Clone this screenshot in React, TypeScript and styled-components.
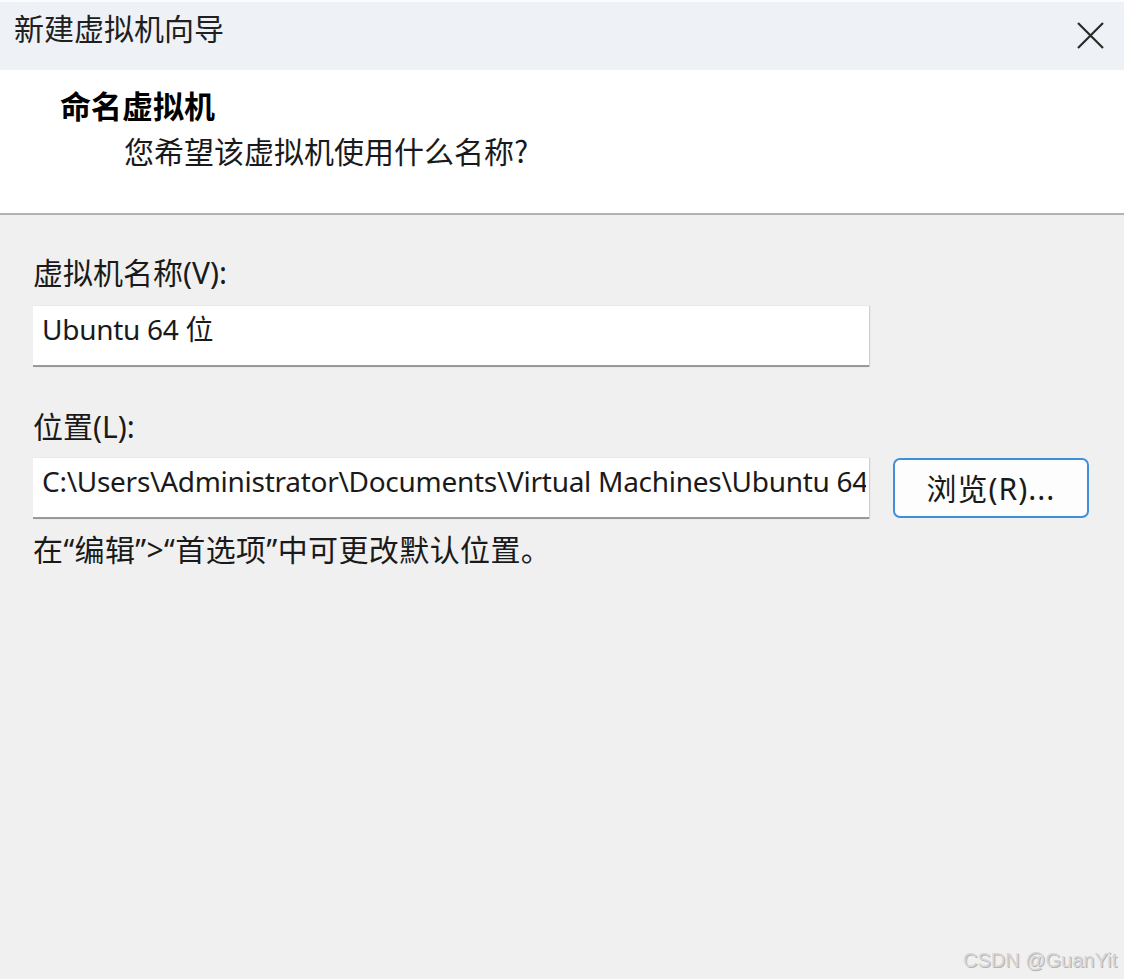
import React from "react";
import styled, { createGlobalStyle } from "styled-components";

const Global = createGlobalStyle`
  html, body { margin: 0; padding: 0; background: #f0f0f0; }
  body { font-family: "Noto Sans", "Noto Sans CJK SC", sans-serif; }
`;

const Dialog = styled.div`
  position: relative;
  width: 1124px;
  height: 979px;
  display: flex;
  flex-direction: column;
  background: #f0f0f0;
  border-top: 2px solid #fbfcfd;
  box-sizing: border-box;
  overflow: hidden;
`;

const TitleBar = styled.div`
  height: 68px;
  flex: none;
  display: flex;
  align-items: flex-start;
  justify-content: space-between;
  background: #eef2f7;
  padding: 10px 18px 0 14px;
  box-sizing: border-box;
`;

const TitleText = styled.div`
  font-family: "Noto Sans CJK SC", sans-serif;
  font-size: 30px;
  color: #202020;
  line-height: 1;
`;

const CloseButton = styled.button`
  width: 32px;
  height: 32px;
  border: none;
  background: transparent;
  padding: 0;
  display: flex;
  align-items: center;
  justify-content: center;
  margin-top: 7px;
`;

const Header = styled.div`
  height: 143px;
  flex: none;
  background: #ffffff;
  border-bottom: 2px solid #b2b2b2;
  box-sizing: content-box;
  padding: 0 0 0 60px;
  display: flex;
  flex-direction: column;
`;

const HeaderTitle = styled.div`
  font-family: "Noto Sans CJK SC", sans-serif;
  font-weight: 700;
  font-size: 31px;
  line-height: 1;
  color: #000;
  margin-top: 19px;
`;

const HeaderSub = styled.div`
  font-family: "Noto Sans CJK SC", sans-serif;
  font-size: 30px;
  line-height: 1;
  color: #1a1a1a;
  margin: 15px 0 0 64px;
`;

const Body = styled.div`
  flex: 1;
  padding: 43px 35px 0 33px;
  display: flex;
  flex-direction: column;
`;

const Label = styled.div<{ $top?: number }>`
  font-size: 30px;
  line-height: 1;
  color: #1a1a1a;
  margin-top: ${(p) => p.$top ?? 0}px;
`;

const Field = styled.input`
  display: block;
  width: 836px;
  height: 61px;
  box-sizing: border-box;
  border: none;
  border-bottom: 2px solid #9a9a9a;
  box-shadow: 1px 0 1px #d0d0d0;
  background: #fff;
  padding: 0 3px 16px 9px;
  font-family: "Noto Sans", "Noto Sans CJK SC", sans-serif;
  font-size: 28px;
  letter-spacing: -0.28px;
  color: #1a1a1a;
  outline: none;
`;

const Row = styled.div<{ $top: number }>`
  display: flex;
  align-items: flex-start;
  gap: 24px;
  margin-top: ${(p) => p.$top}px;
`;

const BrowseButton = styled.button`
  width: 196px;
  height: 60px;
  box-sizing: border-box;
  border: 2px solid #3f8fdb;
  border-radius: 7px;
  background: #fdfdfd;
  font-family: "Noto Sans", "Noto Sans CJK SC", sans-serif;
  font-size: 30px;
  letter-spacing: 1px;
  color: #1a1a1a;
  padding: 0 0 2px 0;
  cursor: default;
`;

const Hint = styled.div`
  font-size: 30px;
  line-height: 1;
  letter-spacing: 0.4px;
  color: #1a1a1a;
  margin-top: 16px;
`;

const Watermark = styled.div`
  position: absolute;
  left: 963px;
  top: 948px;
  font-family: "Liberation Sans", Arial, sans-serif;
  font-size: 20px;
  line-height: 21px;
  color: #d6d6d6;
  text-shadow: 1px 1px 0 #b4b4b4;
  white-space: nowrap;
`;

export default function App() {
  return (
    <>
      <Global />
      <Dialog>
        <TitleBar>
          <TitleText>新建虚拟机向导</TitleText>
          <CloseButton aria-label="关闭">
            <svg width="27" height="27" viewBox="0 0 27 27">
              <path d="M1 1 L26 26 M26 1 L1 26" stroke="#2a2a2a" strokeWidth="2.2" fill="none" />
            </svg>
          </CloseButton>
        </TitleBar>
        <Header>
          <HeaderTitle>命名虚拟机</HeaderTitle>
          <HeaderSub>您希望该虚拟机使用什么名称?</HeaderSub>
        </Header>
        <Body>
          <Label>虚拟机名称(V):</Label>
          <Row $top={18}>
            <Field readOnly value="Ubuntu 64 位" />
          </Row>
          <Label $top={45}>位置(L):</Label>
          <Row $top={16}>
            <Field readOnly value="C:\Users\Administrator\Documents\Virtual Machines\Ubuntu 64 位" />
            <BrowseButton>浏览(R)...</BrowseButton>
          </Row>
          <Hint>在“编辑”&gt;“首选项”中可更改默认位置。</Hint>
        </Body>
        <Watermark>CSDN @GuanYit</Watermark>
      </Dialog>
    </>
  );
}
